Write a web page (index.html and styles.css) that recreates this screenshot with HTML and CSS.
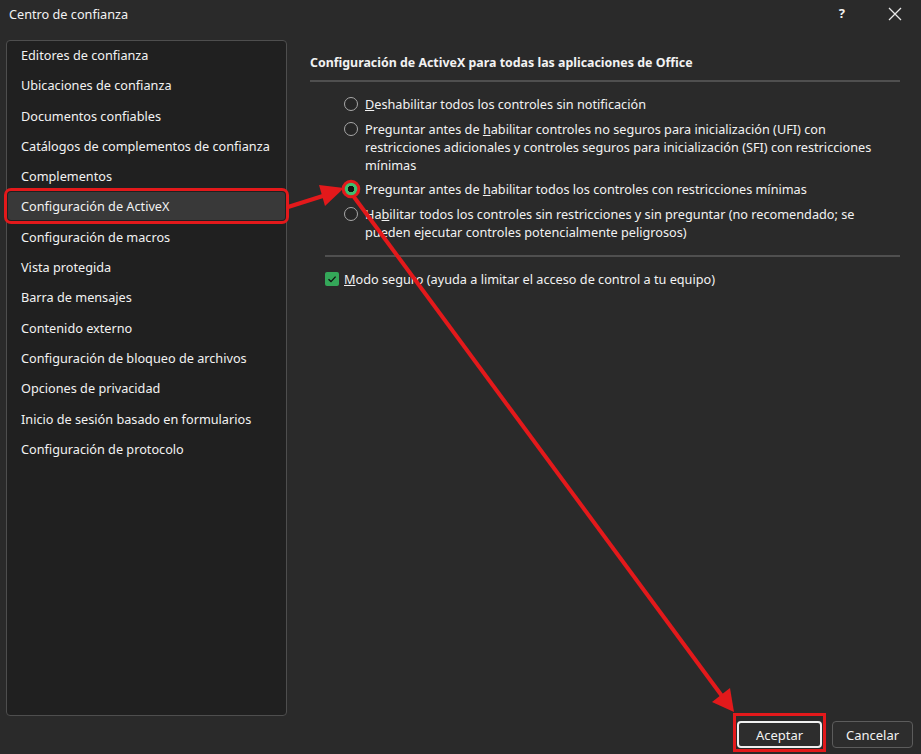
FILE: index.html
```html
<!DOCTYPE html>
<html lang="es">
<head>
    <meta charset="UTF-8">
    <meta name="viewport" content="width=device-width, initial-scale=1.0">
    <title>Centro de confianza</title>
    <link rel="stylesheet" href="styles.css">
</head>
<body>
    <div class="dialog">
        <div class="titlebar">
            <span class="title">Centro de confianza</span>
            <span class="help">?</span>
            <svg class="close" width="14" height="14" viewBox="0 0 14 14">
                <path d="M1 1 L13 13 M13 1 L1 13" stroke="#e8e8e8" stroke-width="1.3" fill="none"/>
            </svg>
        </div>

        <div class="main">
            <ul class="nav">
                <li>Editores de confianza</li>
                <li>Ubicaciones de confianza</li>
                <li>Documentos confiables</li>
                <li>Catálogos de complementos de confianza</li>
                <li>Complementos</li>
                <li class="selected">Configuración de ActiveX</li>
                <li>Configuración de macros</li>
                <li>Vista protegida</li>
                <li>Barra de mensajes</li>
                <li>Contenido externo</li>
                <li>Configuración de bloqueo de archivos</li>
                <li>Opciones de privacidad</li>
                <li>Inicio de sesión basado en formularios</li>
                <li>Configuración de protocolo</li>
            </ul>

            <div class="content">
                <h2 class="section-title">Configuración de ActiveX para todas las aplicaciones de Office</h2>
                <div class="options">
                    <label class="option">
                        <span class="radio"></span>
                        <span class="option-text"><u>D</u>eshabilitar todos los controles sin notificación</span>
                    </label>
                    <label class="option">
                        <span class="radio"></span>
                        <span class="option-text">Preguntar antes de <u>h</u>abilitar controles no seguros para inicialización (UFI) con restricciones adicionales y controles seguros para inicialización (SFI) con restricciones mínimas</span>
                    </label>
                    <label class="option">
                        <span class="radio checked"></span>
                        <span class="option-text">Preguntar antes de <u>h</u>abilitar todos los controles con restricciones mínimas</span>
                    </label>
                    <label class="option">
                        <span class="radio"></span>
                        <span class="option-text">Ha<u>b</u>ilitar todos los controles sin restricciones y sin preguntar (no recomendado; se pueden ejecutar controles potencialmente peligrosos)</span>
                    </label>
                </div>
                <div class="check-row">
                    <span class="checkbox">
                        <svg width="14" height="14" viewBox="0 0 14 14">
                            <path d="M3.5 7.2 L6 9.6 L10.6 4.6" stroke="#111" stroke-width="1.4" fill="none"/>
                        </svg>
                    </span>
                    <span><u>M</u>odo seguro (ayuda a limitar el acceso de control a tu equipo)</span>
                </div>
            </div>
        </div>

        <div class="footer">
            <div class="callout">
                <button class="btn primary">Aceptar</button>
            </div>
            <button class="btn">Cancelar</button>
        </div>
    </div>

    <!-- red annotation arrows -->
    <svg class="annotations" width="921" height="754" viewBox="0 0 921 754">
        <line x1="288" y1="207" x2="326" y2="195" stroke="#e3191b" stroke-width="4"/>
        <polygon points="344,188 319,185 325,206" fill="#e3191b"/>
        <circle cx="351" cy="189" r="7.8" fill="none" stroke="#e3191b" stroke-width="3"/>
        <line x1="354" y1="197" x2="722" y2="696" stroke="#e3191b" stroke-width="4"/>
        <polygon points="734,712 712,702 730,688" fill="#e3191b"/>
    </svg>
</body>
</html>
```

FILE: styles.css
```css
body {
    margin: 0;
    background-color: #2a2a2a;
    color: #f2f2f2;
    font-family: 'Noto Sans', 'Segoe UI', sans-serif;
    font-size: 12.7px;
}

.dialog {
    width: 921px;
    height: 754px;
    display: flex;
    flex-direction: column;
}

.titlebar {
    height: 40px;
    display: flex;
    align-items: flex-start;
    padding-left: 9px;
}

.title {
    margin-top: 5px;
    line-height: 18px;
}

.help {
    margin-left: auto;
    margin-top: 4px;
    font-weight: 700;
    font-size: 13px;
}

.close {
    margin: 7px 19px 0 43px;
}

.main {
    height: 676px;
    display: flex;
}

.nav {
    list-style: none;
    margin: 0 0 0 6px;
    padding: 0 1px;
    width: 277px;
    border: 1px solid #4e4e4e;
    border-radius: 4px;
    background-color: #202020;
}

.nav li {
    height: 28px;
    line-height: 28px;
    margin-bottom: 2.3px;
    padding-left: 13px;
    border-radius: 3px;
    white-space: nowrap;
}

.nav li.selected {
    background-color: #393939;
    outline: 3px solid #e3191b;
    outline-offset: 1px;
}

.content {
    flex: 1;
    margin-left: 23px;
    padding-right: 21px;
}

.section-title {
    margin: 14px 0 0;
    font-size: 12.4px;
    font-weight: 700;
    line-height: 18px;
    padding-bottom: 8px;
    border-bottom: 2px solid #4f4f4f;
}

.options {
    display: flex;
    flex-direction: column;
    gap: 6.6px;
    margin-left: 34px;
    padding: 13px 0 14px;
    width: 528px;
}

.option {
    display: flex;
    align-items: flex-start;
    gap: 7px;
    line-height: 18px;
}

.radio {
    flex: none;
    width: 12px;
    height: 12px;
    margin-top: 2px;
    border: 1px solid #a8a8a8;
    border-radius: 50%;
    background-color: #262626;
}

.radio.checked {
    border-color: #3fbf6e;
    background: radial-gradient(circle, #111 0 3px, #3fbf6e 3.5px);
}

.check-row {
    display: flex;
    align-items: center;
    gap: 5px;
    margin-left: 15px;
    padding-top: 13px;
    border-top: 2px solid #4f4f4f;
    line-height: 18px;
}

.checkbox {
    width: 14px;
    height: 14px;
    border-radius: 2px;
    background-color: #34a759;
    display: flex;
}

.footer {
    display: flex;
    justify-content: flex-end;
    align-items: flex-end;
    gap: 6px;
    padding-right: 8px;
    margin-top: -3px;
}

.callout {
    border: 3px solid #e3191b;
    padding: 5px 1px 1px;
}

.btn {
    height: 27px;
    width: 81px;
    font-family: inherit;
    font-size: 13px;
    color: #f2f2f2;
    background-color: #2d2d2d;
    border: 1px solid #5c5c5c;
    border-radius: 4px;
    margin-bottom: 4px;
}

.btn.primary {
    width: 85px;
    border: 2px solid #f0f0f0;
    margin-bottom: 0;
    display: block;
}

.annotations {
    position: absolute;
    left: 0;
    top: 0;
    pointer-events: none;
}
```
